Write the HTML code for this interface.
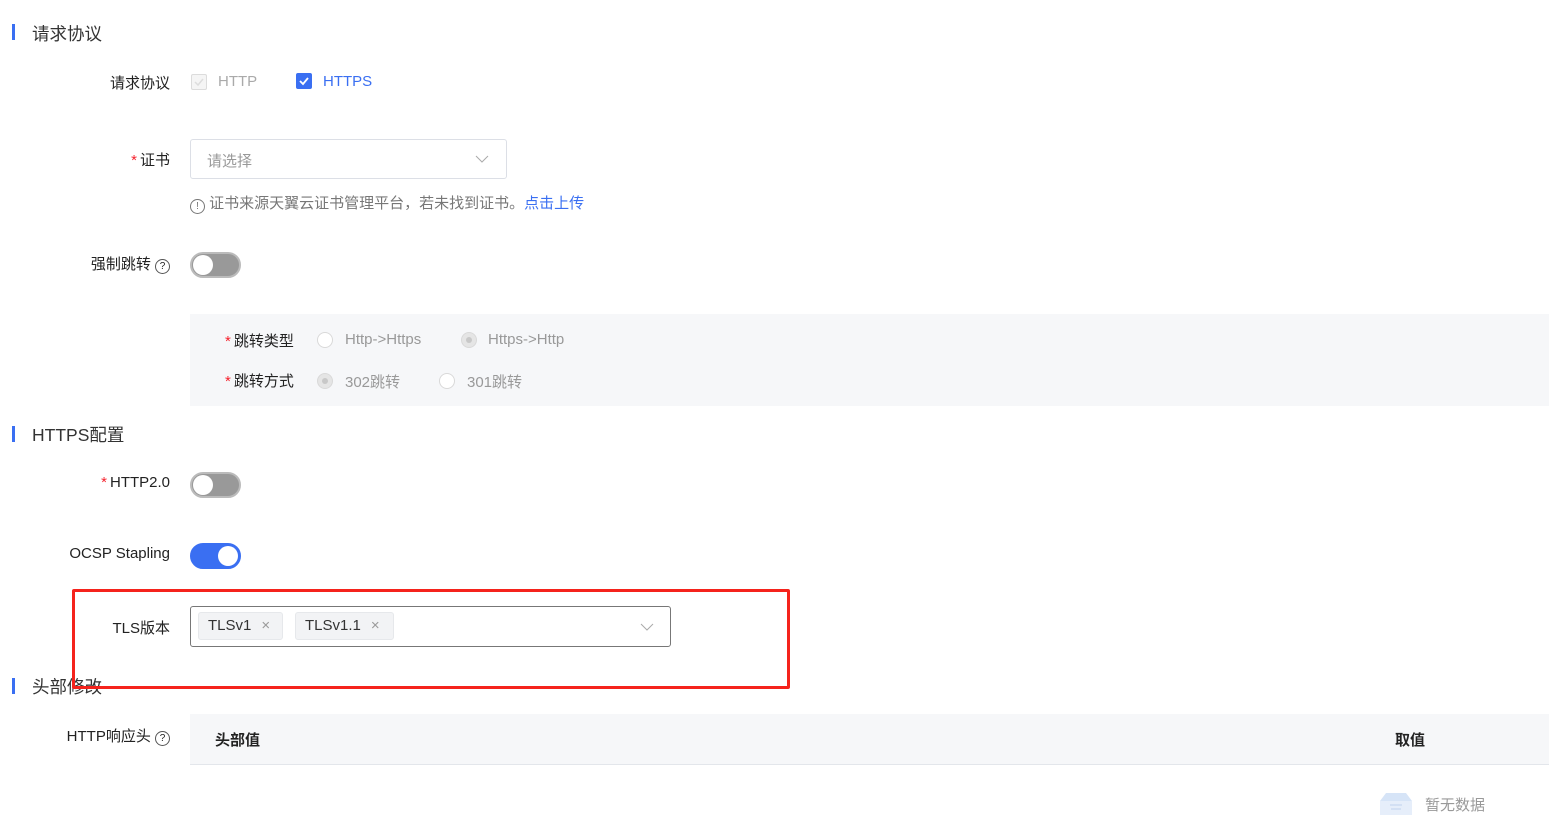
<!DOCTYPE html>
<html><head><meta charset="utf-8"><style>
*{box-sizing:border-box;margin:0;padding:0}
body{width:1549px;height:838px;background:#fff;font-family:"Liberation Sans","Noto Sans CJK SC",sans-serif;font-size:15px;color:#222;position:relative;overflow:hidden}
.a{position:absolute;white-space:nowrap}
.bar{position:absolute;left:12px;width:3px;height:16px;background:#3a6ff2}
.sec{font-size:17.5px;color:#333}
.lbl{text-align:right;width:170px;left:0}
.star{color:#f5222d;margin-right:3px}
.cb{position:absolute;width:16px;height:16px;border:1px solid #dcdcdc;border-radius:2px;background:#f5f5f5}
.sw{position:absolute;width:51px;height:26px;border-radius:13px;background:#999;border:2px solid #bbb}
.sw i{position:absolute;top:1px;left:1px;width:20px;height:20px;border-radius:50%;background:#fff}
.rd{position:absolute;width:16px;height:16px;border:1px solid #d9d9d9;border-radius:50%;background:#fff}
.rd.on{background:#e5e5e5}
.rd.on i{position:absolute;left:4px;top:4px;width:6px;height:6px;border-radius:50%;background:#c8c8c8}
.tag{position:absolute;top:612px;height:28px;background:#f2f3f5;border:1px solid #e6e8eb;border-radius:3px;font-size:15px;line-height:26px;padding-left:9px;color:#333}
.tag span{color:#999;margin-left:10px}
</style></head><body>
<div class="bar" style="top:24px"></div><div class="a sec" style="left:32px;top:21px">请求协议</div>
<div class="a lbl" style="top:72px">请求协议</div>
<div class="cb" style="left:191px;top:74px"><svg width="14" height="14" style="position:absolute;left:0;top:0"><path d="M3 7l3 3 5-6" stroke="#ddd" fill="none" stroke-width="1.5"/></svg></div>
<div class="a" style="left:218px;top:73px;color:#aaa">HTTP</div>
<div class="cb" style="left:296px;top:73px;background:#3a6ff2;border-color:#3a6ff2"><svg width="14" height="14" style="position:absolute;left:0;top:0"><path d="M3 7l3 3 5-6" stroke="#fff" fill="none" stroke-width="1.8"/></svg></div>
<div class="a" style="left:323px;top:73px;color:#3a6ff2">HTTPS</div>
<div class="a lbl" style="top:149px"><span class="star">*</span>证书</div>
<div class="a" style="left:190px;top:139px;width:317px;height:40px;border:1px solid #dcdfe6;border-radius:3px"></div>
<div class="a" style="left:207px;top:150px;color:#999">请选择</div>
<svg class="a" style="left:475px;top:154px" width="14" height="10"><path d="M1 2l6 6 6-6" stroke="#aaa" fill="none"/></svg>
<div class="a" style="left:190px;top:192px;color:#777"><span style="display:inline-block;width:15px;height:15px;border:1px solid #777;border-radius:50%;font-size:10px;line-height:13px;text-align:center;vertical-align:-1px">!</span> 证书来源天翼云证书管理平台，若未找到证书。<span style="color:#3a6ff2">点击上传</span></div>
<div class="a lbl" style="top:253px">强制跳转 <span style="display:inline-block;width:15px;height:15px;border:1px solid #555;border-radius:50%;font-size:10px;line-height:13px;text-align:center">?</span></div>
<div class="sw" style="left:190px;top:252px"><i></i></div>
<div class="a" style="left:190px;top:314px;width:1359px;height:92px;background:#f6f7f9"></div>
<div class="a" style="left:225px;top:330px"><span class="star">*</span>跳转类型</div>
<div class="rd" style="left:317px;top:332px"></div><div class="a" style="left:345px;top:331px;color:#999">Http-&gt;Https</div>
<div class="rd on" style="left:461px;top:332px"><i></i></div><div class="a" style="left:488px;top:331px;color:#999">Https-&gt;Http</div>
<div class="a" style="left:225px;top:370px"><span class="star">*</span>跳转方式</div>
<div class="rd on" style="left:317px;top:373px"><i></i></div><div class="a" style="left:345px;top:371px;color:#999">302跳转</div>
<div class="rd" style="left:439px;top:373px"></div><div class="a" style="left:467px;top:371px;color:#999">301跳转</div>
<div class="bar" style="top:426px"></div><div class="a sec" style="left:32px;top:422px">HTTPS配置</div>
<div class="a lbl" style="top:474px"><span class="star">*</span>HTTP2.0</div>
<div class="sw" style="left:190px;top:472px"><i></i></div>
<div class="a lbl" style="top:545px">OCSP Stapling</div>
<div class="sw" style="left:190px;top:543px;background:#3a6ff2;border-color:#3a6ff2"><i style="left:26px"></i></div>
<div class="a lbl" style="top:617px">TLS版本</div>
<div class="a" style="left:190px;top:606px;width:481px;height:41px;border:1px solid #777;border-radius:3px"></div>
<div class="tag" style="left:198px;width:85px">TLSv1<span>×</span></div>
<div class="tag" style="left:295px;width:99px">TLSv1.1<span>×</span></div>
<svg class="a" style="left:640px;top:622px" width="14" height="10"><path d="M1 2l6 6 6-6" stroke="#aaa" fill="none"/></svg>
<div class="bar" style="top:678px"></div><div class="a sec" style="left:32px;top:674px">头部修改</div>
<div class="a" style="left:72px;top:589px;width:718px;height:100px;border:3px solid #f5231c;border-radius:2px"></div>
<div class="a lbl" style="top:725px">HTTP响应头 <span style="display:inline-block;width:15px;height:15px;border:1px solid #555;border-radius:50%;font-size:10px;line-height:13px;text-align:center">?</span></div>
<div class="a" style="left:190px;top:714px;width:1359px;height:51px;background:#f6f7f9;border-bottom:1px solid #e3e6eb"></div>
<div class="a" style="left:215px;top:729px;font-weight:bold">头部值</div>
<div class="a" style="left:1395px;top:729px;font-weight:bold">取值</div>
<svg class="a" style="left:1380px;top:793px" width="32" height="22"><path d="M6 0h20l6 8H0z" fill="#d6e4f7"/><rect x="0" y="8" width="32" height="14" fill="#e6eefa"/><path d="M10 12h12M11 16h10" stroke="#c0d2ee"/></svg>
<div class="a" style="left:1425px;top:794px;color:#999">暂无数据</div>
</body></html>
